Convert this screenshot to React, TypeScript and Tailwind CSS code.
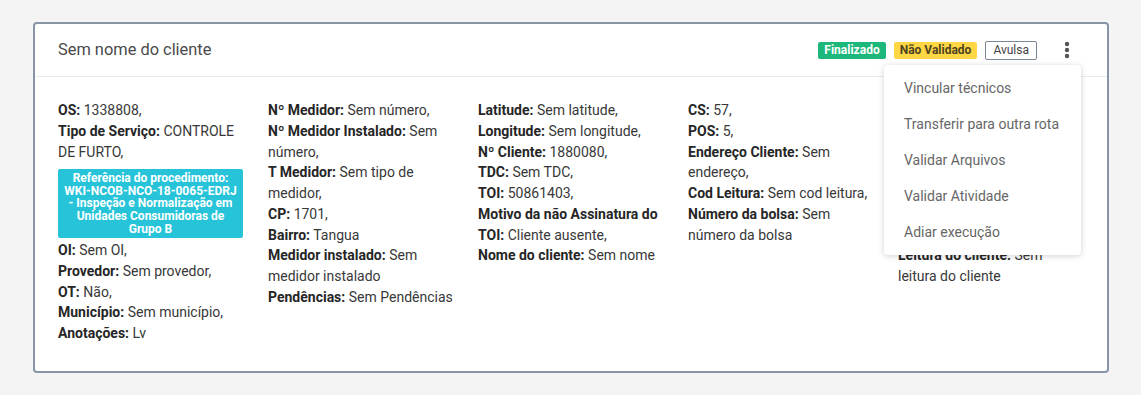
const columns: { label: string; value: string }[][] = [
  [
    { label: "OS:", value: "1338808," },
    { label: "Tipo de Serviço:", value: "CONTROLE DE FURTO," },
  ],
  [
    { label: "Nº Medidor:", value: "Sem número," },
    { label: "Nº Medidor Instalado:", value: "Sem número," },
    { label: "T Medidor:", value: "Sem tipo de medidor," },
    { label: "CP:", value: "1701," },
    { label: "Bairro:", value: "Tangua" },
    { label: "Medidor instalado:", value: "Sem medidor instalado" },
    { label: "Pendências:", value: "Sem Pendências" },
  ],
  [
    { label: "Latitude:", value: "Sem latitude," },
    { label: "Longitude:", value: "Sem longitude," },
    { label: "Nº Cliente:", value: "1880080," },
    { label: "TDC:", value: "Sem TDC," },
    { label: "TOI:", value: "50861403," },
    { label: "Motivo da não Assinatura do TOI:", value: "Cliente ausente," },
    { label: "Nome do cliente:", value: "Sem nome" },
  ],
  [
    { label: "CS:", value: "57," },
    { label: "POS:", value: "5," },
    { label: "Endereço Cliente:", value: "Sem endereço," },
    { label: "Cod Leitura:", value: "Sem cod leitura," },
    { label: "Número da bolsa:", value: "Sem número da bolsa" },
  ],
  [
    { label: "Equipe:", value: "Sem equipe," },
    { label: "Rota:", value: "Sem rota," },
    { label: "Lote:", value: "Sem lote," },
    { label: "Prioridade:", value: "Normal," },
    { label: "Execução:", value: "12/03/2024," },
    { label: "Hora:", value: "10:32," },
    { label: "Fase:", value: "Monofásico," },
    { label: "Leitura do cliente:", value: "Sem leitura do cliente" },
  ],
];

const firstColumnTail = [
  { label: "OI:", value: "Sem OI," },
  { label: "Provedor:", value: "Sem provedor," },
  { label: "OT:", value: "Não," },
  { label: "Município:", value: "Sem município," },
  { label: "Anotações:", value: "Lv" },
];

const menuItems = [
  "Vincular técnicos",
  "Transferir para outra rota",
  "Validar Arquivos",
  "Validar Atividade",
  "Adiar execução",
];

function Field({ label, value }: { label: string; value: string }) {
  return (
    <div>
      <span className="font-bold text-[#262626]">{label}</span>{" "}
      <span className="text-[#383838]">{value}</span>
    </div>
  );
}

export default function App() {
  return (
    <div className="min-h-[395px] bg-[#f4f4f4] pt-[22px] pl-[33px] pr-[32px] font-['Roboto',_'Liberation_Sans',_sans-serif]">
      <div className="relative rounded-[4px] border-2 border-[#8895a7] bg-white">
        <div className="flex h-[53px] items-center border-b border-[#e9ecef] pl-[23px] pr-[20px]">
          <h1 className="text-[16.4px] text-[#4a4a4a]">Sem nome do cliente</h1>
          <div className="ml-auto flex items-center gap-[8px]">
            <span className="rounded-[2px] bg-[#1cb77b] px-[6px] text-[12px] font-bold leading-[17px] text-white">
              Finalizado
            </span>
            <span className="rounded-[2px] bg-[#ffd745] px-[6px] text-[12px] font-bold leading-[17px] text-[#4d4321]">
              Não Validado
            </span>
            <span className="rounded-[2px] border border-[#7b8797] px-[7px] text-[12px] leading-[17px] text-[#444]">
              Avulsa
            </span>
            <button className="ml-[2px] flex h-[30px] w-[40px] items-center justify-center text-[#555]">
              <svg width="6" height="18" viewBox="0 0 6 18" fill="currentColor">
                <circle cx="3" cy="3" r="2.2" />
                <circle cx="3" cy="9" r="2.2" />
                <circle cx="3" cy="15" r="2.2" />
              </svg>
            </button>
          </div>
        </div>

        <div className="grid grid-cols-[repeat(5,210px)] pl-[23px] pt-[23px] pb-[27px] text-[14px] leading-[20.75px]">
          <div className="pr-[18px]">
            {columns[0].map((f) => (
              <Field key={f.label} {...f} />
            ))}
            <div className="mt-[7px] mb-[2px] w-[185px] rounded-[2px] bg-[#27c4d9] px-[4px] py-[3px] text-center text-[12px] font-bold leading-[12.6px] text-white">
              Referência do procedimento: WKI-NCOB-NCO-18-0065-EDRJ - Inspeção e Normalização em Unidades Consumidoras de Grupo B
            </div>
            {firstColumnTail.map((f) => (
              <Field key={f.label} {...f} />
            ))}
          </div>
          {columns.slice(1).map((col, i) => (
            <div key={i} className="pr-[24px]">
              {col.map((f) => (
                <Field key={f.label} {...f} />
              ))}
            </div>
          ))}
        </div>

        <div className="absolute right-[26px] top-[41px] w-[197px] rounded-[4px] bg-white py-[5px] shadow-[0_1px_6px_rgba(0,0,0,0.18)]">
          {menuItems.map((item) => (
            <div key={item} className="flex h-[36px] items-center pl-[20px] text-[14px] text-[#666]">
              {item}
            </div>
          ))}
        </div>
      </div>
    </div>
  );
}
